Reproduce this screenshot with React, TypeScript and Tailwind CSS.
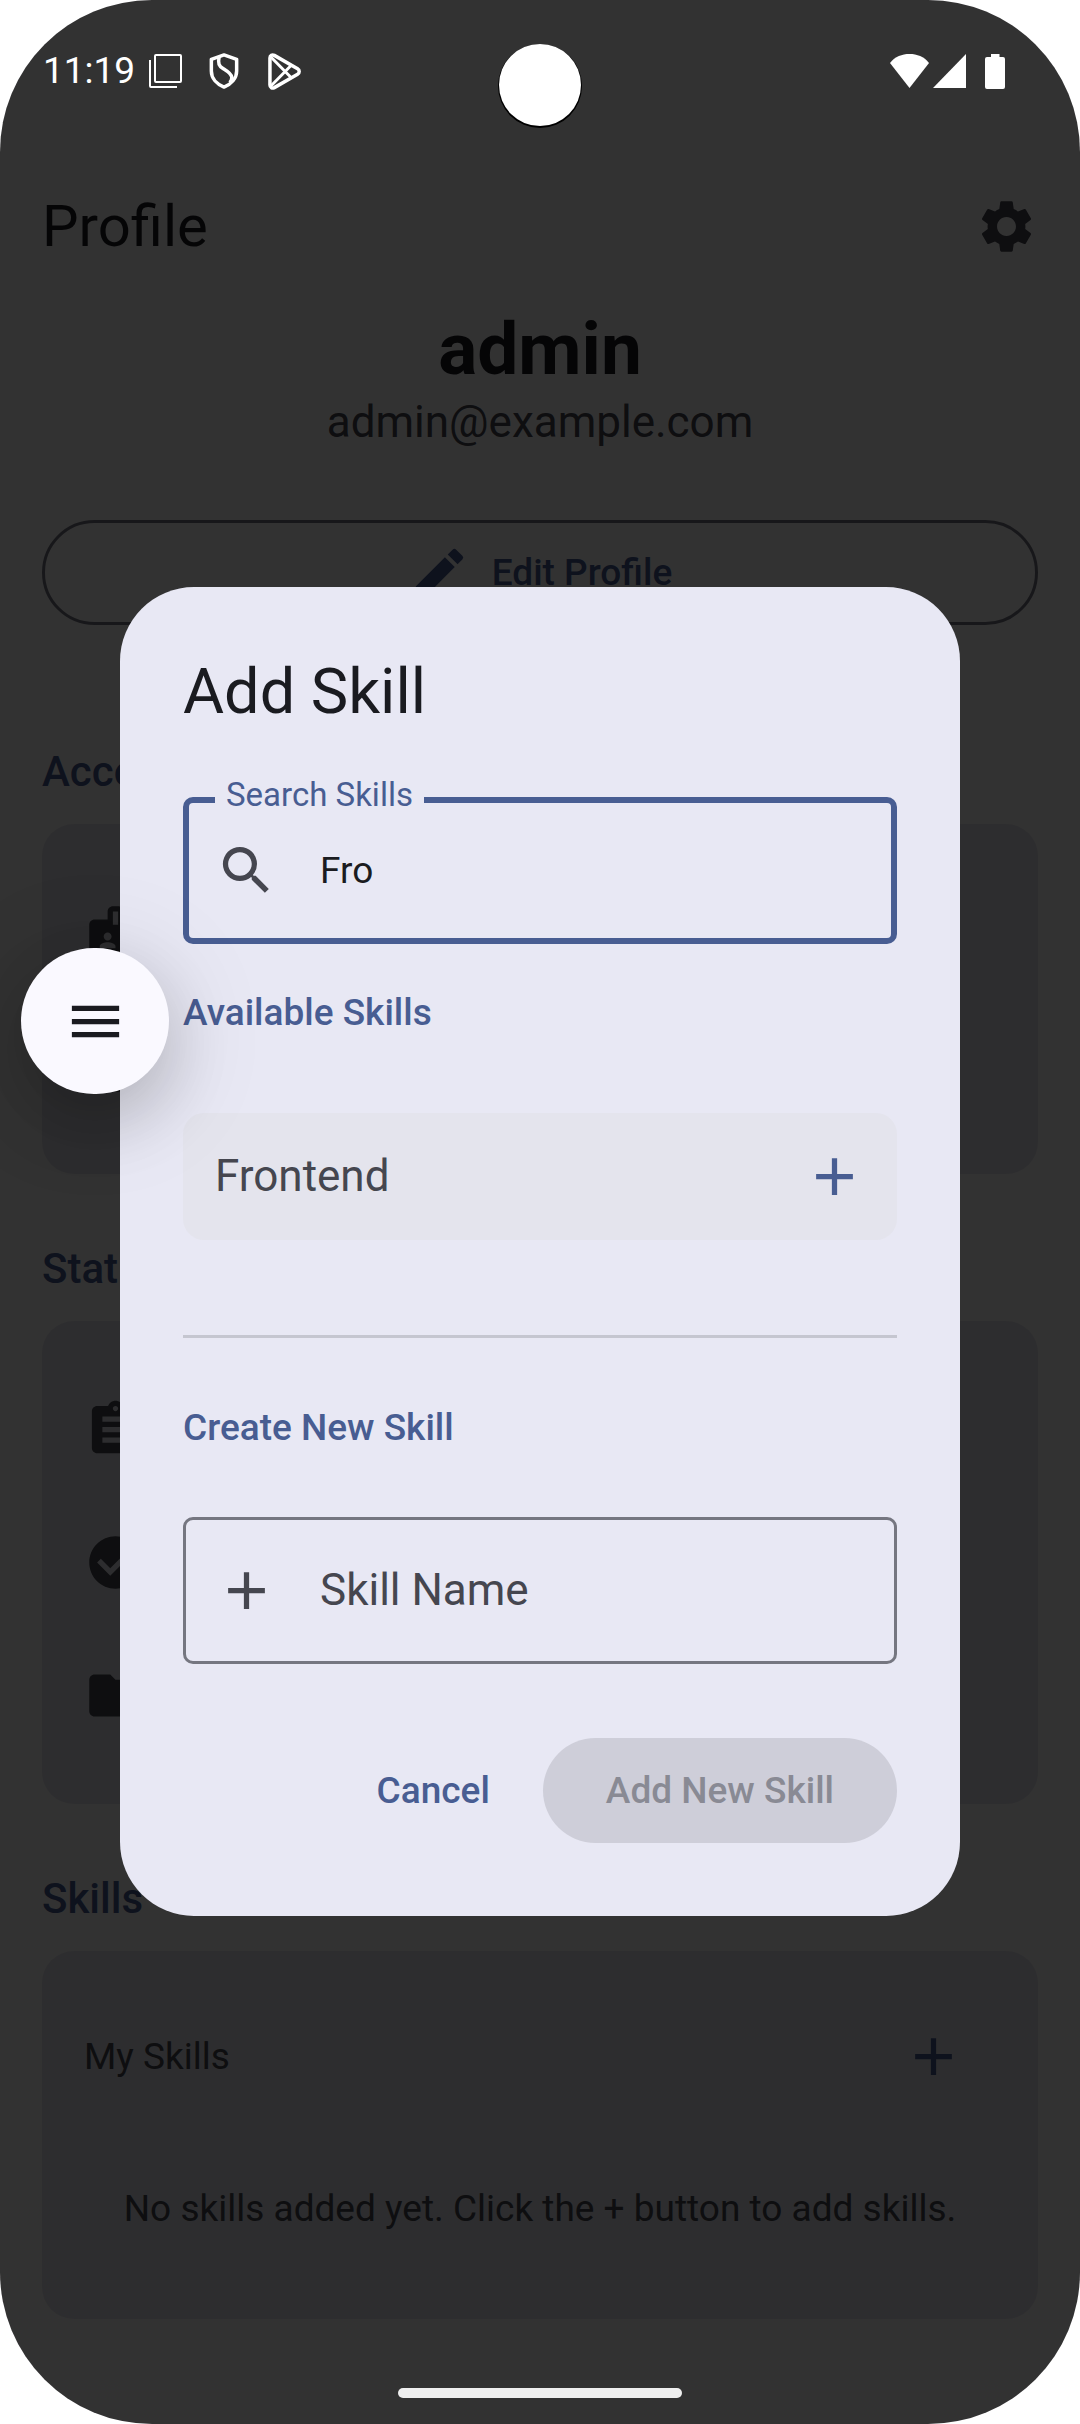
import type { ReactNode } from "react";
import {
  MdAdd,
  MdAssignment,
  MdBadge,
  MdCalendarMonth,
  MdCheckCircle,
  MdEdit,
  MdFolder,
  MdMenu,
  MdSearch,
  MdSettings,
} from "react-icons/md";

const iconSize = "size-[63px] shrink-0";

function StatusBar() {
  return (
    <div className="relative z-20 flex h-[163px] items-start justify-between pl-[43px] pr-[75px] pt-[45px] text-white">
      <div className="flex h-[52px] items-center">
        <span className="w-[106px] text-[37px] leading-[52px]">11:19</span>
        <svg className="h-[34px] w-[33px]" viewBox="0 0 33 34" fill="none" stroke="currentColor" strokeWidth="2">
          <rect x="6" y="1" width="26" height="27" rx="1" />
          <path d="M1 6v26a1 1 0 0 0 1 1h26" />
        </svg>
        <svg className="ml-[27px] h-[36px] w-[30px]" viewBox="0 0 30 37" fill="none" stroke="currentColor" strokeWidth="3.6" strokeLinejoin="round">
          <path d="M15 2 28 6.500v12C28 26 22.500 32 15 35 7.500 32 2 26 2 18.500v-12Z" />
          <path d="M10 4c-1.500 7 0 9.500 4 12s8.500 5 9 9c.2 2-.5 3.500-2 5.500" />
        </svg>
        <svg className="ml-[29px] h-[37px] w-[33px]" viewBox="0 0 34 38" fill="none" stroke="currentColor" strokeWidth="3.6" strokeLinejoin="round">
          <path d="M2 5v28c0 2.500 2.300 3.800 4.500 2.600L30.500 21.800c2.200-1.300 2.200-4.300 0-5.600L6.500 2.400C4.300 1.200 2 2.500 2 5Z" />
          <path d="M3 4 24 25.500M3 34 24 12.500" strokeWidth="3" />
        </svg>
      </div>
      <div className="flex h-[52px] items-center">
        <svg className="h-[34px] w-[39px]" viewBox="0 0 39 34" fill="currentColor">
          <path d="M19.500 0C12 0 5 2.500 0 9l19.500 25L39 9C34 2.500 27 0 19.500 0Z" />
        </svg>
        <svg className="ml-1 h-[34px] w-[33px]" viewBox="0 0 33 34" fill="currentColor">
          <path d="M33 0v34H0Z" />
        </svg>
        <svg className="ml-[19px] h-[35px] w-5" viewBox="0 0 20 35" fill="currentColor">
          <path d="M6 0h8.500v3H18a2 2 0 0 1 2 2v28a2 2 0 0 1-2 2H2a2 2 0 0 1-2-2V5a2 2 0 0 1 2-2h4Z" />
        </svg>
      </div>
      <div className="absolute left-1/2 top-[44px] size-[82px] -translate-x-1/2 rounded-full bg-white shadow-[0_1px_0_1px_#000]" />
    </div>
  );
}

function Section({ title, children }: { title: string; children: ReactNode }) {
  return (
    <section>
      <h2 className="text-[42px] font-medium leading-[63px] text-[#485d92]">{title}</h2>
      <div className="mt-[21px] rounded-[32px] bg-[#e2e2e9] p-[42px] text-[#45464f]">{children}</div>
    </section>
  );
}

function IconRow({ children }: { children: ReactNode }) {
  return <div className="flex h-[133px] items-center">{children}</div>;
}

function ProfilePage() {
  return (
    <>
      <header className="flex h-[126px] items-center justify-between pl-[42px] pr-[11px]">
        <h1 className="text-[58px] leading-[74px] text-[#1a1b20]">Profile</h1>
        <button aria-label="Settings" className="flex size-[126px] items-center justify-center text-[#45464f]">
          <MdSettings className={iconSize} />
        </button>
      </header>
      <main className="px-[42px] pt-[18px]">
        <p className="text-center text-[73px] font-bold leading-[84px] text-[#1a1b20]">admin</p>
        <p className="text-center text-[44px] leading-[63px] text-[#45464f]">admin@example.com</p>
        <button className="mt-[66px] flex h-[105px] w-full items-center justify-center gap-[21px] rounded-full border-[3px] border-[#757680] text-[37px] font-medium text-[#485d92]">
          <MdEdit className={iconSize} />
          Edit Profile
        </button>
        <div className="mt-[115px] flex flex-col gap-[63px]">
          <Section title="Account">
            <IconRow><MdBadge className={iconSize} /></IconRow>
            <IconRow><MdCalendarMonth className={iconSize} /></IconRow>
          </Section>
          <Section title="Statistics">
            <IconRow><MdAssignment className={iconSize} /></IconRow>
            <IconRow><MdCheckCircle className={iconSize} /></IconRow>
            <IconRow><MdFolder className={iconSize} /></IconRow>
          </Section>
          <Section title="Skills">
            <div className="flex items-center justify-between">
              <h3 className="text-[37px] leading-[53px]">My Skills</h3>
              <button aria-label="Add skill" className="flex size-[126px] items-center justify-center text-[#485d92]">
                <MdAdd className={iconSize} />
              </button>
            </div>
            <p className="mb-[42px] mt-[63px] whitespace-nowrap text-center text-[37px] leading-[53px]">
              No skills added yet. Click the + button to add skills.
            </p>
          </Section>
        </div>
      </main>
    </>
  );
}

function AddSkillDialog() {
  return (
    <div className="absolute inset-0 flex items-center justify-center bg-black/80 px-[120px] pb-[63px] pt-[142px]">
      <div
        role="dialog"
        aria-labelledby="dialog-title"
        className="w-full rounded-[74px] bg-[#e8e8f4] px-[63px] pb-[73px] pt-[63px]"
      >
        <h2 id="dialog-title" className="text-[63px] leading-[84px] text-[#1a1b20]">Add Skill</h2>

        <div className="relative mt-[63px] flex h-[147px] items-center gap-[42px] rounded-[10px] border-[6px] border-[#485d92] px-[26px]">
          <label htmlFor="search" className="absolute -top-[29px] left-[26px] bg-[#e8e8f4] px-[11px] text-[33px] leading-[42px] text-[#485d92]">
            Search Skills
          </label>
          <MdSearch className="size-[63px] shrink-0 text-[#45464f]" />
          <input
            id="search"
            type="text"
            defaultValue="Fro"
            className="w-full min-w-0 bg-transparent text-[37px] leading-[63px] text-[#1a1b20] outline-none"
          />
        </div>

        <h3 className="mt-[42px] text-[37px] font-medium leading-[53px] text-[#485d92]">Available Skills</h3>
        <div className="mt-[74px] flex h-[127px] items-center justify-between rounded-[21px] bg-[#e4e4ed] pl-8">
          <span className="text-[44px] leading-[63px] text-[#45464f]">Frontend</span>
          <button aria-label="Add Frontend" className="flex size-[126px] items-center justify-center text-[#485d92]">
            <MdAdd className={iconSize} />
          </button>
        </div>

        <hr className="mt-[95px] border-t-[3px] border-[#c5c6d0]" />

        <h3 className="mt-[63px] text-[37px] font-medium leading-[53px] text-[#485d92]">Create New Skill</h3>
        <div className="mt-[63px] flex h-[147px] items-center gap-[42px] rounded-[10px] border-[3px] border-[#757680] px-[29px] text-[#45464f]">
          <MdAdd className={iconSize} />
          <input
            type="text"
            aria-label="Skill Name"
            placeholder="Skill Name"
            className="w-full min-w-0 bg-transparent text-[44px] leading-[63px] outline-none placeholder:text-[#45464f]"
          />
        </div>

        <div className="mt-[74px] flex justify-end gap-[21px] text-[37px] font-medium">
          <button className="h-[105px] rounded-full px-8 text-[#485d92]">Cancel</button>
          <button disabled className="h-[105px] rounded-full bg-[#ceced9] px-[63px] text-[#898a94]">
            Add New Skill
          </button>
        </div>
      </div>
    </div>
  );
}

export default function App() {
  return (
    <div className="bg-white font-['Roboto',sans-serif]">
      <div className="relative min-h-screen overflow-hidden rounded-[152px] bg-[#faf9fb]">
        <StatusBar />
        <ProfilePage />
        <AddSkillDialog />
        <button
          aria-label="Open menu"
          className="absolute left-[21px] top-[948px] flex h-[146px] w-[148px] items-center justify-center rounded-full bg-[#faf9ff] text-[#1a1b20] shadow-[0_28px_64px_rgba(0,0,0,0.16),0_14px_110px_rgba(0,0,0,0.14)]"
        >
          <MdMenu className={iconSize} />
        </button>
        <div className="absolute bottom-[26px] left-1/2 h-[10px] w-[284px] -translate-x-1/2 rounded-full bg-[#efefef]" />
      </div>
    </div>
  );
}
